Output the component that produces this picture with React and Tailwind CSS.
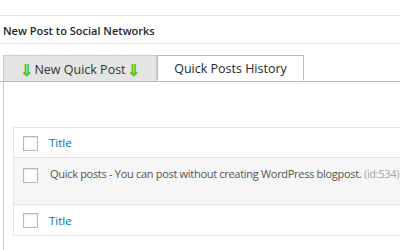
import React from 'react';

function Checkbox() {
  return <span className="block w-[15px] h-[15px] border border-[#b4b9be] bg-white shadow-[inset_0_1px_2px_rgba(0,0,0,0.1)]"></span>;
}

function Arrow() {
  return <span className="text-[#4cc417] font-bold text-[16px] leading-none">⇓</span>;
}

export default function App() {
  return (
    <div className="w-[400px] h-[250px] bg-white overflow-hidden font-['Open_Sans',sans-serif] text-[#23282d]">
      <div className="w-[600px]">
        <div className="mt-[15px] border-t border-[#e5e5e5]"></div>
        <div className="h-[28px] flex items-center pt-[3px] pl-[3px] border-b border-[#e5e5e5] text-[11px] font-semibold">
          New Post to Social Networks
        </div>
        <div className="mt-[11px] flex pl-[3px] border-b border-[#bbbbbb]">
          <div className="w-[154px] h-[26px] flex items-center justify-center gap-[1px] pt-[3px] bg-[#e4e4e4] border border-[#cccccc] border-b-0 text-[12.5px] text-[#333]">
            <Arrow />
            <span>New Quick Post</span>
            <Arrow />
          </div>
          <div className="w-[147px] h-[26px] -mb-px flex items-center justify-center pt-[3px] bg-white border border-[#bbbbbb] border-b-white text-[12.5px] text-[#23282d]">
            Quick Posts History
          </div>
        </div>
        <div className="ml-[3px] border-l border-[#cccccc] pt-[45px] pl-[9px] pb-[20px]">
          <div className="border border-[#e5e5e5] text-[11.5px]">
            <div className="h-[30px] flex items-center pt-[1px] pl-[9px] border-b border-[#e1e1e1]">
              <Checkbox />
              <span className="ml-[11px] text-[#0073aa]">Title</span>
            </div>
            <div className="h-[47px] flex items-start pt-[9px] pl-[9px] bg-[#f6f6f6] border-b border-[#e1e1e1]">
              <div className="pt-[1px]"><Checkbox /></div>
              <span className="ml-[12px] -mt-[1px] text-[#555] text-[11px] tracking-[-0.3px]">
                Quick posts - You can post without creating WordPress blogpost. <span className="text-[#a0a5aa]">(id:534)</span>
              </span>
            </div>
            <div className="h-[30px] flex items-center pt-[1px] pl-[9px]">
              <Checkbox />
              <span className="ml-[11px] text-[#0073aa]">Title</span>
            </div>
          </div>
        </div>
      </div>
    </div>
  );
}
